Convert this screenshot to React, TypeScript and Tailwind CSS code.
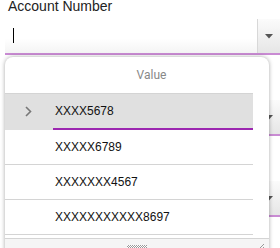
import { Fragment } from "react";

const ROWS = ["XXXX5678", "XXXXX6789", "XXXXXXX4567", "XXXXXXXXXXX8697"];

function Caret() {
  return (
    <svg width="8" height="5" viewBox="0 0 8 5" className="text-[#555]">
      <path d="M0 0h8L4 4.5z" fill="currentColor" />
    </svg>
  );
}

function Field({ label, cursor }: { label: string; cursor?: boolean }) {
  return (
    <div className="flex flex-col">
      <div className="h-[18px] pl-[8px] text-[14px] leading-[14px] font-medium text-[#222] font-['Liberation_Sans',Arial,sans-serif] -mt-[1px]">
        {label}
      </div>
      <div className="ml-[5px] h-[38px] flex items-stretch border-b-2 border-[#c98bd3] bg-gradient-to-b from-white from-60% to-[#f4f4f4]">
        <div className="flex-1 flex items-center pl-[8px]">
          {cursor && <span className="w-px h-[15px] bg-black" />}
        </div>
        <div className="mt-[2px] w-[23px] flex items-center justify-center border-l border-[#d8d8d8] bg-gradient-to-b from-[#fbfbfb] to-[#e6e6e6]">
          <Caret />
        </div>
      </div>
    </div>
  );
}

export default function App() {
  return (
    <div className="relative w-[280px] h-[248px] overflow-hidden bg-white font-['Roboto',sans-serif]">
      <div className="flex flex-col gap-[26px]">
        <Field label="Account Number" cursor />
        <Field label="Routing Number" />
        <Field label="Bank Name" />
      </div>

      <div className="absolute left-[5px] top-[57px] w-[264px] h-[195px] bg-white rounded-t-[8px] shadow-[0_0_4px_rgba(0,0,0,0.35)] flex flex-col overflow-hidden">
        <div className="flex pr-[16px]">
          <div className="w-[45px]" />
          <div className="flex-1 h-[36px] flex items-center justify-center text-[12px] text-[#888]">
            Value
          </div>
        </div>
        <div className="mr-[16px] border-t border-[#d4d4d4]" />
        {ROWS.map((r, i) => (
          <Fragment key={r}>
            <div className={`mr-[16px] h-[34px] flex items-center ${i === 0 ? "bg-[#e0e0e0]" : ""}`}>
              <div className="w-[45px] flex items-center justify-center pl-[2px]">
                {i === 0 && (
                  <svg width="7" height="11" viewBox="0 0 7 11" className="text-[#777]">
                    <path d="M1 1l4.5 4.5L1 10" fill="none" stroke="currentColor" strokeWidth="1.6" />
                  </svg>
                )}
              </div>
              <div className="flex-1 h-full flex items-center pl-[5px] text-[12px] text-[#111] font-['Liberation_Sans',Arial,sans-serif]">
                {r}
              </div>
            </div>
            {i === 0 ? (
              <div className="mr-[16px] flex">
                <div className="w-[48px] h-[2px] bg-[#e0e0e0]" />
                <div className="flex-1 h-[2px] bg-[#9c27b0]" />
              </div>
            ) : (
              <div className="mr-[16px] border-t border-[#d4d4d4]" />
            )}
          </Fragment>
        ))}
        <div className="h-[3px]" />
        <div className="border-t border-[#d4d4d4] flex-1 bg-[#f5f5f5] flex items-end justify-center relative">
          <div className="mb-[2px] w-[20px] h-[5px] bg-[repeating-conic-gradient(#999_0_25%,#fff_0_50%)] bg-[length:2px_2px]" />
          <svg width="8" height="8" viewBox="0 0 8 8" className="absolute right-[4px] bottom-[1px] text-[#999]">
            <path d="M7 1L1 7M7 4L4 7M7 7h0" stroke="currentColor" strokeWidth="1" />
          </svg>
        </div>
      </div>
    </div>
  );
}
